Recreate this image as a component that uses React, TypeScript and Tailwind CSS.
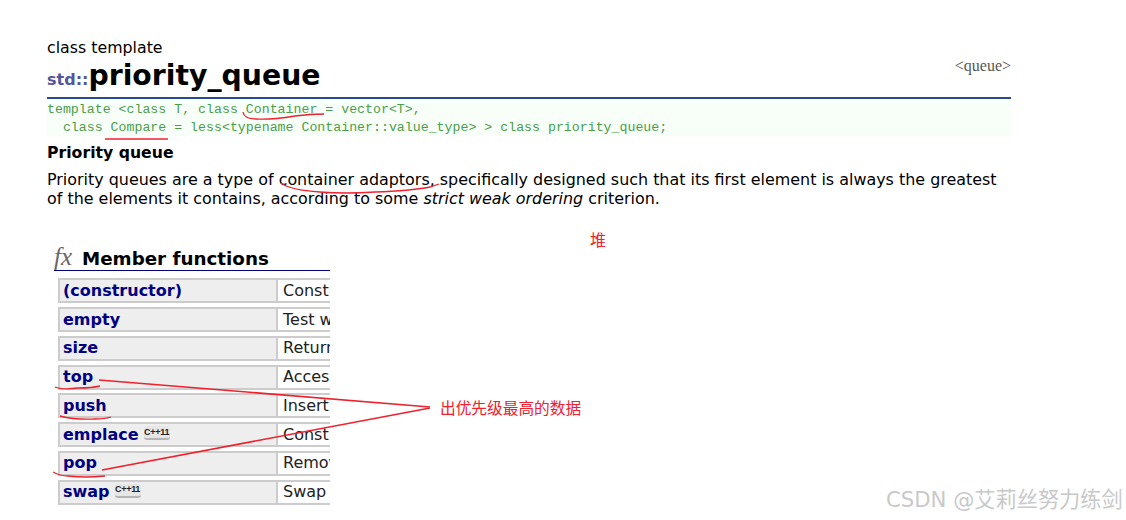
const SANS = "font-['DejaVu_Sans','Noto_Sans_CJK_SC',sans-serif]";

const MEMBERS = [
  { name: "(constructor)", desc: "Constr" },
  { name: "empty", desc: "Test w" },
  { name: "size", desc: "Return" },
  { name: "top", desc: "Access" },
  { name: "push", desc: "Insert" },
  { name: "emplace", desc: "Constr", cpp11: true },
  { name: "pop", desc: "Remov" },
  { name: "swap", desc: "Swap", cpp11: true },
];

function Cpp11Badge() {
  return (
    <span className="mb-[3px] ml-[5px] inline-flex h-[14px] w-[26px] items-center justify-center rounded-[3px] border-b-2 border-[#b5b5b5] bg-[#e6e6e6] font-['Liberation_Sans',sans-serif] text-[9px] leading-none font-bold tracking-[-0.3px] text-[#222]">
      C++11
    </span>
  );
}

function FxIcon() {
  return (
    <span className="mb-[4px] w-[28px] font-['Liberation_Serif',serif] text-[25px] leading-none text-[#666] italic">
      fx
    </span>
  );
}

function MemberRow({ name, desc, cpp11 }: { name: string; desc: string; cpp11?: boolean }) {
  return (
    <div className="flex h-[25px] w-[272px] overflow-hidden">
      <div className="flex h-full w-[220px] shrink-0 items-center border-2 border-[#cccccc] bg-[#eeeeee] pl-[3px]">
        <span className="text-[16px] font-bold text-[#000080]">{name}</span>
        {cpp11 && <Cpp11Badge />}
      </div>
      <div className="flex h-full flex-1 items-center border-y-2 border-[#cccccc] pl-[5px] text-[16px] whitespace-nowrap text-[#222]">
        {desc}
      </div>
    </div>
  );
}

// hand-drawn red marks on top of the page
function Annotations() {
  return (
    <svg className="absolute top-0 left-0" width="1126" height="520" fill="none" stroke="#f0202c" strokeWidth="1.3">
      <path d="M243 112 Q244 119 256 119 Q270 120 295 116 Q310 114 324 114" />
      <path d="M105 139 Q130 139 168 139" />
      <path d="M281 183 Q290 190 320 192 Q345 194 375 192 Q410 191 430 187 L439 184" />
      <path d="M55 387 Q62 390 78 388 Q92 388 100 386" />
      <path d="M60 416 Q75 420 95 419 Q105 419 111 417" />
      <path d="M53 472 Q60 476 68 476 Q85 478 105 476" />
      <path d="M99 380 L430 407" strokeWidth="1.6" />
      <path d="M102 470 L430 408" strokeWidth="1.6" />
    </svg>
  );
}

export default function App() {
  return (
    <div className={`relative h-[520px] w-[1126px] overflow-hidden bg-white text-black ${SANS}`}>
      <div className="ml-[47px] flex w-[964px] flex-col pt-[38px]">
        <div className="flex h-[61px] items-start justify-between border-b-2 border-[#2b4a8c]">
          <div>
            <div className="text-[15.8px] leading-[19px]">class template</div>
            <div className="mt-[1px] flex items-baseline">
              <span className="text-[16px] font-bold text-[#555599]">std::</span>
              <span className="text-[28.3px] leading-[36px] font-bold">priority_queue</span>
            </div>
          </div>
          <span className="mt-[18px] font-['Liberation_Serif',serif] text-[16px] leading-[20px] text-[#555]">
            {"<queue>"}
          </span>
        </div>
        <pre className="h-[37px] bg-[#f8fff8] pt-[2px] font-['Liberation_Mono',monospace] text-[13.25px] leading-[18px] text-[#4a9e4a]">
          {"template <class T, class Container = vector<T>,\n  class Compare = less<typename Container::value_type> > class priority_queue;"}
        </pre>
        <h2 className="mt-[7px] text-[15.7px] leading-[20px] font-bold">Priority queue</h2>
        <p className="mt-[7px] text-[15.93px] leading-[19px]">
          Priority queues are a type of container adaptors, specifically designed such that its first element is always the greatest
          of the elements it contains, according to some <em>strict weak ordering</em> criterion.
        </p>
      </div>

      <div className="mt-[37px] ml-[54px] flex w-[276px] flex-col">
        <div className="flex h-[26px] items-center border-b border-[#000080] pt-[2px]">
          <FxIcon />
          <span className="text-[18.3px] font-bold">Member functions</span>
        </div>
        <div className="mt-[7.3px] ml-[4px] flex flex-col gap-[3.75px]">
          {MEMBERS.map((m) => (
            <MemberRow key={m.name} {...m} />
          ))}
        </div>
      </div>

      <Annotations />
      <span className="absolute top-[232px] left-[590px] text-[16px] leading-[18px] text-[#f0202c]">堆</span>
      <span className="absolute top-[400px] left-[440px] text-[15.7px] leading-[18px] text-[#f0202c]">出优先级最高的数据</span>
      <span className="absolute top-[487px] left-[886px] text-[21.2px] leading-[26px] text-[#c9c9c9]">CSDN @艾莉丝努力练剑</span>
    </div>
  );
}
